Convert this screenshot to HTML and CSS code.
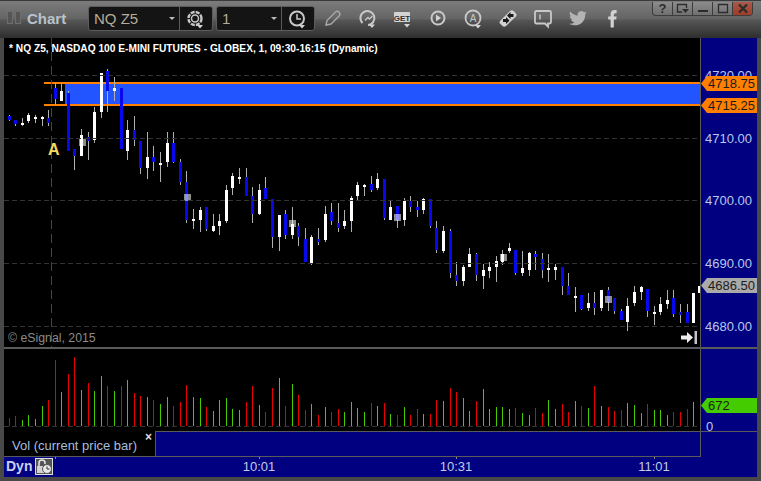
FILE: index.html
```html
<!DOCTYPE html>
<html lang="en">
<head>
<meta charset="utf-8">
<title>Chart</title>
<link rel="stylesheet" href="styles.css">
</head>
<body>
<div class="window">
  <header class="toolbar">
    <div class="grip"><span></span><span></span></div>
    <div class="win-title">Chart</div>
    <div class="combo symbol">
      <div class="combo-value"><span>NQ Z5</span><i class="caret"></i></div>
      <div class="combo-btn">
        <svg width="22" height="22" viewBox="0 0 22 22"><circle class="ic" cx="10" cy="9.500" r="3.500" stroke-width="1.500"/><circle class="ic" cx="10" cy="9.500" r="6.500" stroke-width="2.400" stroke-dasharray="4 1.100"/><path class="ifill" d="M12 16h6l-3 3.500z"/></svg>
      </div>
    </div>
    <div class="combo interval">
      <div class="combo-value"><span>1</span><i class="caret"></i></div>
      <div class="combo-btn">
        <svg width="22" height="22" viewBox="0 0 22 22"><circle class="ic" cx="10" cy="9.500" r="7" stroke-width="2"/><path class="ic" d="M10 5v5h4" stroke-width="1.500"/><path class="ifill" d="M12 16h6l-3 3.500z"/></svg>
      </div>
    </div>
    <nav class="tools">
      <svg width="24" height="24" viewBox="0 0 24 24"><path class="ic dim" d="M5 19l1-4.500L14.500 6q2-1.500 3.500 0t.5 3.500L10 18z" stroke-width="1.400"/></svg>
      <svg width="24" height="24" viewBox="0 0 24 24"><path class="ic" d="M6.500 17A7 7 0 1 1 12 19" stroke-width="2"/><path class="ic" d="M9 14.500l3-3 1.500 1.500 3-3" stroke-width="1.300"/><path class="ifill" d="M13 18.500h6L16 22z"/></svg>
      <svg width="24" height="24" viewBox="0 0 24 24"><rect class="ifill" x="3" y="6" width="16" height="10" rx="1"/><text class="get" x="11" y="14.500">GET</text><path class="ifill" d="M13 18h6l-3 3.500z"/></svg>
      <svg width="24" height="24" viewBox="0 0 24 24"><circle class="ic" cx="12" cy="12" r="6.500" stroke-width="2"/><path class="ifill" d="M10 8.500l5 3.500-5 3.500z"/></svg>
      <svg width="24" height="24" viewBox="0 0 24 24"><circle class="ic" cx="12" cy="12" r="7.500" stroke-width="1.800"/><text class="a-mark" x="12" y="15.500">A</text><path class="ifill" d="M14 19h6l-3 3.500z"/></svg>
      <svg width="24" height="24" viewBox="0 0 24 24"><path class="ifill" d="M4 15L14 5q2-1.500 3.500 0l2.500 2.500q1 1.500 0 3L10 20q-2 1.500-3.500 0l-2.500-2.500q-1-1 0-2.500z"/><path class="idark" d="M11 9.500l3.500-3.500v2h3v3h-3v2zM7 13h3v-2l3.500 3.500L10 18v-2H7z"/></svg>
      <svg width="24" height="24" viewBox="0 0 24 24"><path class="ic" d="M5.500 5h13q1.500 0 1.500 1.500v9.500q0 1.500-1.500 1.500H17v3l-3-3H5.500Q4 17.500 4 16V6.500Q4 5 5.500 5z" stroke-width="1.800"/><path class="ic" d="M9 8.500v5" stroke-width="1.400"/></svg>
      <svg width="24" height="24" viewBox="-3 -3 30 30"><path class="ifill dim-fill" d="M23 5.500q-1.300.6-2.600.8 1.400-.9 2-2.500-1.400.8-2.900 1.100a4.600 4.600 0 0 0-7.900 4.200C7.800 8.400 4.500 6.700 2.200 3.900 1 6 1.600 8.700 3.700 10q-1 0-2-.5c0 2.200 1.500 4.100 3.700 4.600q-1 .3-2.100.1c.6 1.800 2.300 3.100 4.300 3.200A9.500 9.500 0 0 1 1 19.300c6.500 4.100 20.200 1.800 20-11.800q1.200-.9 2-2z"/></svg>
      <svg width="24" height="24" viewBox="-2 -3 30 30"><path class="ifill" d="M10 24V14H7v-4h3V7q0-5 5-5h2.500v4H16q-2 0-2 2v2h3.500l-.5 4h-3v10z"/></svg>
    </nav>
    <div class="win-buttons">
      <button class="wb">?</button>
      <button class="wb"><svg width="14" height="11" viewBox="0 0 14 11"><path class="wb-line" d="M6 9H1.500V1.500h9V5"/><path class="wb-fill" d="M6 6h7l-3.500 4z"/></svg></button>
      <button class="wb"><svg width="12" height="11" viewBox="0 0 12 11"><path class="wb-fill" d="M1 7h10v2H1z"/></svg></button>
      <button class="wb"><svg width="12" height="11" viewBox="0 0 12 11"><path class="wb-line" d="M1.500 1.500h9v8h-9z"/></svg></button>
      <button class="wb wb-close"><svg width="12" height="11" viewBox="0 0 12 11"><path class="wb-x" d="M2 1.500l8 8M10 1.500l-8 8"/></svg></button>
    </div>
  </header>

  <main class="workspace">
    <section class="pane price-pane">
      <div class="plot">
        <svg id="price" class="canvas" width="696" height="309" viewBox="4 38 696 309"></svg>
        <div class="chart-heading">* NQ Z5, NASDAQ 100 E-MINI FUTURES - GLOBEX, 1, 09:30-16:15 (Dynamic)</div>
        <div class="marker">A</div>
        <div class="copyright">© eSignal, 2015</div>
        <svg class="jump" width="16" height="13" viewBox="0 0 16 13"><path class="jump-arrow" d="M0 4.500h6V1l6 5.500-6 5.500V8.500H0z"/><path class="jump-bar" d="M13.500 0H16v13h-2.500z"/></svg>
      </div>
      <div class="axis">
        <span class="tick t4720">4720.00</span>
        <span class="tick t4710">4710.00</span>
        <span class="tick t4700">4700.00</span>
        <span class="tick t4690">4690.00</span>
        <span class="tick t4680">4680.00</span>
        <span class="tag tag-orange t1">4718.75</span>
        <span class="tag tag-orange t2">4715.25</span>
        <span class="tag tag-gray t3">4686.50</span>
      </div>
    </section>
    <div class="divider"></div>
    <section class="pane vol-pane">
      <div class="plot">
        <svg id="volume" class="canvas" width="696" height="82" viewBox="4 349 696 82"></svg>
      </div>
      <div class="axis">
        <span class="tick t-zero">0</span>
        <span class="tag tag-green t4">672</span>
      </div>
    </section>
    <section class="legend-row">
      <div class="legend"><span>Vol (current price bar)</span><b class="close">×</b></div>
      <div class="legend-fill"></div>
      <div class="axis-blank"></div>
    </section>
    <footer class="time-axis">
      <div class="dyn">Dyn</div>
      <div class="lock">
        <svg width="16" height="15" viewBox="0 0 16 15"><path class="lock-shackle" d="M3 7V4q0-3 3-3t3 3v1"/><path class="ifill" d="M1 7h9v7H1z"/><circle class="lock-clock" cx="11" cy="10" r="4.500"/><path class="lock-hand" d="M11 7.500V10h2.500"/></svg>
      </div>
      <span class="time-mark m0"></span>
      <span class="time-mark m1"></span><span class="time-label l1">10:01</span>
      <span class="time-mark m2"></span><span class="time-label l2">10:31</span>
      <span class="time-mark m3"></span><span class="time-label l3">11:01</span>
    </footer>
  </main>
</div>
<script src="chart.js"></script>
</body>
</html>
```
FILE: styles.css
```css
* { box-sizing: border-box; }
html, body { margin: 0; padding: 0; background: #444; }
body { font-family: "Liberation Sans", Arial, sans-serif; overflow: hidden; }

.window { width: 761px; height: 481px; display: flex; flex-direction: column; background: #484848; position: relative; }

/* toolbar */
.toolbar {
  height: 38px; flex: none; display: flex; align-items: flex-start; padding: 5px 8px 0 7px;
  border-top: 1px solid #3a3a3a; position: relative;
  background: linear-gradient(#7c7c7c 0, #646464 18px, #565656 19px, #2e2e2e 37px);
}
.grip { display: flex; gap: 2px; margin-top: 5px; }
.grip span { width: 6px; height: 13px; border: 1px solid #6e6e6e; background: #555; }
.win-title { font-weight: bold; font-size: 15px; line-height: 17px; color: #b9c3cc; margin: 4px 0 0 6px; width: 61px; }
.combo { display: flex; height: 25px; background: #141414; border: 1px solid #5c5c5c; border-radius: 3px; color: #b4ac9a; font-size: 15px; }
.symbol { width: 125px; }
.interval { width: 99px; margin-left: 3px; }
.combo-value { flex: 1; display: flex; align-items: center; justify-content: space-between; padding: 0 3px 0 5px; border-right: 1px solid #5c5c5c; }
.caret { width: 0; height: 0; border: 3px solid transparent; border-top: 3px solid #bbb; border-bottom: 0; margin-right: 1px; }
.combo-btn { width: 32px; display: flex; align-items: center; justify-content: center; padding-top: 2px; }
.tools { display: flex; gap: 11px; margin: 0 0 0 6px; }
.tools svg { display: block; }
.ic { fill: none; stroke: #c8c8c8; }
.dim { stroke: #a8a8a8; }
.ifill { fill: #d2d2d2; }
.dim-fill { fill: #b4b4b4; }
.idark { fill: #1a1a1a; }
.get { font: bold 8px "Liberation Sans", sans-serif; fill: #333; text-anchor: middle; }
.a-mark { font: 10px "Liberation Sans", sans-serif; fill: #c8c8c8; text-anchor: middle; }
.win-buttons {
  position: absolute; right: 8px; top: 1px; display: flex; height: 14px; width: 101px;
  border: 1px solid #3c3c3c; border-top: 0; border-radius: 0 0 4px 4px; overflow: hidden;
  background: linear-gradient(#8c8c8c, #707070);
}
.wb {
  flex: 1; padding: 0; border: 0; border-right: 1px solid #3c3c3c; background: transparent;
  font: bold 13px/13px "Liberation Sans", sans-serif; color: #2c2c2c;
  display: flex; align-items: center; justify-content: center;
}
.wb-close { border-right: 0; background: linear-gradient(#a85a48, #a03c28); }
.wb-line { fill: none; stroke: #2c2c2c; stroke-width: 1.300; }
.wb-fill { fill: #2c2c2c; }
.wb-x { fill: none; stroke: #2c2c2c; stroke-width: 2.400; }

/* panes */
.workspace { flex: 1; display: flex; flex-direction: column; padding: 0 4px 4px; min-height: 0; }
.pane { display: flex; flex: none; }
.price-pane { height: 309px; }
.vol-pane { height: 82px; }
.divider { height: 2px; flex: none; background: #5a5a5a; }
.plot { width: 696px; flex: none; background: #000; position: relative; overflow: hidden; }
.canvas { display: block; }
.axis { flex: 1; background: #000080; border-left: 1px solid #5a5a5a; position: relative; }

.grid { stroke: #333; stroke-width: 1; stroke-dasharray: 5 3; shape-rendering: crispEdges; }
.crosshair { stroke: #444; stroke-width: 1; stroke-dasharray: 9 5; shape-rendering: crispEdges; }
.zone { fill: #2255ff; }
.zone-edge { fill: #ff8000; }
.wick { fill: #b0b0b0; }
.up { fill: #fff; }
.down { fill: #0808ee; }
.trade { fill: rgba(255, 255, 255, .55); }
.vol-up { fill: #44cc00; }
.vol-down { fill: #e60000; }

.chart-heading { position: absolute; left: 5px; top: 5px; font-weight: bold; font-size: 10.200px; line-height: 12px; color: #fff; white-space: nowrap; }
.marker { position: absolute; left: 44px; top: 103px; font-weight: bold; font-size: 16px; line-height: 18px; color: #f8d860; }
.copyright { position: absolute; left: 4px; top: 293px; font-size: 12.300px; line-height: 14px; color: #8a8a8a; }
.jump { position: absolute; left: 677px; top: 293px; }
.jump-arrow { fill: #eee; }
.jump-bar { fill: #c4c4c4; }

.tick { position: absolute; left: 4px; font-size: 13px; line-height: 15px; color: #b8c8ea; transform: translateY(-50%); }
.t4720 { top: 37px; }
.t4710 { top: 100px; }
.t4700 { top: 162px; }
.t4690 { top: 225px; }
.t4680 { top: 288px; }
.t-zero { top: 77px; left: 5px; }

.tag {
  position: absolute; left: 0; width: 56px; height: 15px; padding: 0 0 0 7px;
  font-size: 13px; line-height: 15px; color: #1c1c1c;
  clip-path: polygon(0 50%, 6px 0, 100% 0, 100% 100%, 6px 100%);
}
.tag-orange { background: #ff8000; }
.tag-gray { background: #aaa; }
.tag-green { background: #44cc00; }
.t1 { top: 38px; }
.t2 { top: 60px; }
.t3 { top: 240px; }
.t4 { top: 49px; }

/* legend row */
.legend-row { height: 25px; flex: none; display: flex; border-top: 1px solid #5a5a5a; background: #000080; position: relative; }
.legend { width: 151px; flex: none; margin-top: -5px; height: 29px; background: #000; color: #a6bede; font-size: 13px; line-height: 15px; padding: 11px 0 0 8px; position: relative; white-space: nowrap; }
.close { position: absolute; left: 141px; top: 4px; font-size: 12px; line-height: 12px; color: #ddd; }
.legend-fill { width: 545px; flex: none; border-left: 1px solid #5a5a5a; }
.axis-blank { flex: 1; border-left: 1px solid #5a5a5a; margin-top: -1px; }

/* time axis */
.time-axis { flex: 1; background: #000080; position: relative; display: flex; align-items: flex-start; }
.time-axis::before { content: ""; position: absolute; left: 0; top: 0; width: 697px; height: 1px; background: #5a5a5a; }
.dyn { font-weight: bold; font-size: 14px; line-height: 16px; color: #c8d0f0; margin: 2px 0 0 2px; width: 29px; }
.lock { width: 18px; height: 17px; margin-top: 2px; background: #555; border: 1px solid #ddd; display: flex; align-items: center; justify-content: center; }
.lock-shackle { fill: none; stroke: #e6e6e6; stroke-width: 1.500; }
.lock-clock { fill: #e6e6e6; stroke: #555; }
.lock-hand { fill: none; stroke: #333; }
.time-mark { position: absolute; top: 1px; width: 1px; height: 2px; background: #8a8a8a; }
.m0 { left: 51px; }
.m1 { left: 255px; }
.m2 { left: 452px; }
.m3 { left: 650px; }
.time-label { position: absolute; top: 3px; font-size: 13px; line-height: 15px; color: #c0cce8; transform: translateX(-50%); }
.l1 { left: 255px; }
.l2 { left: 452px; }
.l3 { left: 650px; }
```
FILE: chart.js
```js
// x, high, low, body top, body bottom, 0 = white / 1 = blue
var bars = [
[9,115,121,116,120,1],[15,120,126,120,124,1],[22,118,126,123,125,0],[28,113,123,115,121,0],[35,115,123,117,119,0],
[42,116,126,117,119,0],[48,110,126,118,123,1],[55,83,105,88,99,1],[61,83,101,91,101,0],[68,91,151,93,151,1],
[74,149,170,149,156,1],[81,129,156,135,156,0],[88,132,160,137,141,1],[94,107,143,112,140,0],[101,73,118,73,112,0],
[107,69,112,71,91,1],[114,77,101,88,91,0],[121,88,149,88,149,1],[127,120,160,130,151,0],[134,116,146,130,140,1],
[140,141,174,141,168,1],[147,132,179,157,168,0],[153,146,171,157,162,1],[160,152,182,163,165,0],[167,132,167,143,162,0],
[173,132,163,143,162,1],[180,159,185,162,182,1],[186,171,223,182,220,1],[193,209,229,219,221,0],[200,207,232,210,220,0],
[206,207,231,207,229,1],[213,214,232,226,231,0],[219,214,235,221,226,0],[226,185,223,190,221,0],[232,173,195,176,188,0],
[239,168,184,177,179,0],[246,168,196,177,196,1],[252,187,223,196,214,1],[259,184,215,190,214,0],[265,177,199,188,199,1],
[272,199,248,199,237,1],[279,215,251,215,237,0],[285,210,239,214,235,1],[292,207,239,224,235,0],[298,223,246,226,237,1],
[305,228,262,239,262,1],[311,235,265,237,264,0],[318,228,245,239,242,1],[325,206,242,214,240,0],[331,203,225,212,221,1],
[338,203,232,223,228,1],[344,210,229,221,226,0],[351,196,232,198,221,0],[357,182,201,185,196,0],[364,184,196,185,187,0],
[371,176,192,184,190,1],[377,173,190,179,188,0],[384,179,220,179,218,1],[390,201,220,207,220,0],[397,206,228,206,220,1],
[404,198,226,201,220,0],[410,196,212,201,207,1],[417,201,217,207,210,1],[423,198,214,199,210,0],[430,199,228,199,226,1],
[436,221,253,228,250,1],[443,226,253,231,251,0],[450,229,278,231,273,1],[456,262,286,275,281,1],[463,265,286,267,281,0],
[469,248,267,254,267,0],[476,253,281,254,275,1],[483,264,289,270,276,0],[489,262,278,267,271,0],[496,256,282,261,267,0],
[502,250,265,254,262,0],[509,243,253,248,251,0],[515,250,275,250,273,1],[522,251,276,268,273,0],[529,252,276,253,270,0],
[535,251,270,254,257,1],[542,253,278,259,270,1],[548,254,282,268,270,0],[555,264,280,267,270,0],[562,267,295,267,286,1],
[568,273,295,286,295,1],[575,287,312,296,298,0],[581,295,310,295,309,1],[588,293,311,303,308,0],[594,292,315,303,308,1],
[601,290,311,290,308,0],[608,287,311,290,302,1],[614,298,314,298,311,1],[621,309,320,311,320,1],[627,298,331,306,322,0],
[634,286,306,292,303,0],[641,286,300,287,292,0],[647,289,317,289,311,1],[654,306,325,312,314,0],[660,297,315,304,312,0],
[667,290,309,300,304,0],[673,290,317,298,314,1],[680,304,323,312,315,1],[687,304,323,312,323,1],[693,293,323,293,323,0],
[699,286,293,286,293,0]
];
// volume tops, measured in 3x pixels above y = 340; r = red, g = green
var vols = "234r 228r 240g 225g 237g 198g 180r 60r 156g 102r 51r 150g 129r 153g 108g 138r 153g 138r 120g 159r 168r 171g 180r 192g 171g 198r 186r 135r 171g 174g 201r 213g 180g 174g 207g 210g 186r " +
  "138r 195g 216r 144r 114g 198r 132g 165r 210r 192g 225r 201g 216r 207r 216g 186g 204g 216g 189r 198g 189r 222g 225r 201g 225r 207r 222g 222r 180r 183g 144r 156r 174g 213g 183r 147g 207g 201g " +
  "201g 207g 204r 219g 225g 204r 219r 180g 207g 192r 216r 183g 198r 204g 138r 198g 201r 213r 210r 189g 195g 219g 192r 210g 210g 225g 216r 216r 207r 186g";
var trades = [[79,139],[184,194],[289,220],[394,214],[500,254],[605,296]];

var NS = "http://www.w3.org/2000/svg";
function el(parent, name, cls, attrs) {
  var n = document.createElementNS(NS, name);
  n.setAttribute("class", cls);
  for (var k in attrs) n.setAttribute(k, attrs[k]);
  parent.appendChild(n);
}
function rect(parent, cls, x, y, w, h) { el(parent, "rect", cls, { x: x, y: y, width: w, height: h }); }
function hline(parent, y, x1, x2) { el(parent, "line", "grid", { x1: x1, x2: x2, y1: y + 0.5, y2: y + 0.5 }); }

var price = document.getElementById("price");
rect(price, "zone", 65, 84, 635, 20);
rect(price, "zone-edge", 44, 82, 656, 2);
rect(price, "zone-edge", 44, 104, 656, 2);
bars.forEach(function (b) {
  rect(price, "wick", b[0], b[1], 1, b[2] - b[1]);
  rect(price, b[5] ? "down" : "up", b[0] - 1, b[3], 3, b[4] - b[3]);
});
trades.forEach(function (t) { rect(price, "trade", t[0], t[1], 7, 7); });
[75, 138, 200, 263, 326].forEach(function (y) { hline(price, y, 4, 700); });
el(price, "line", "crosshair", { x1: 51.5, x2: 51.5, y1: 38, y2: 347 });

var volume = document.getElementById("volume");
vols.split(" ").forEach(function (v, i) {
  var top = Math.round(340 + parseInt(v, 10) / 3);
  rect(volume, v.slice(-1) === "r" ? "vol-down" : "vol-up", bars[i][0], top, 1, 426 - top);
});
hline(volume, 426, 4, 700);
```
